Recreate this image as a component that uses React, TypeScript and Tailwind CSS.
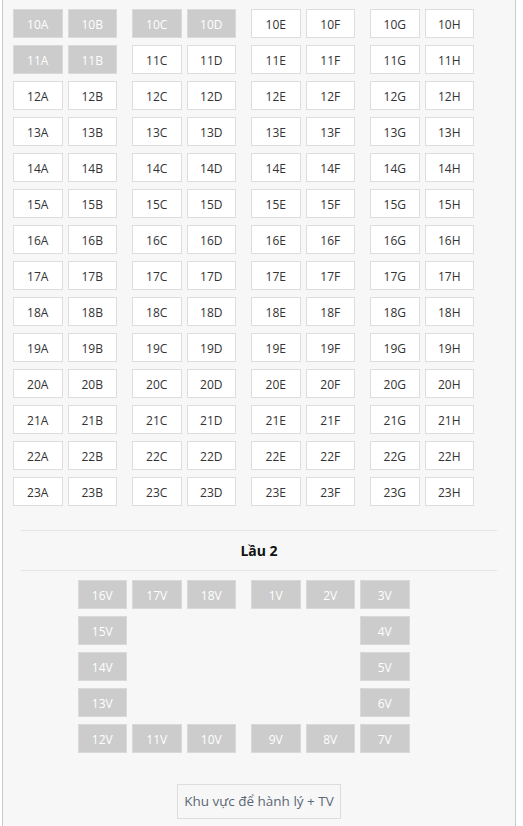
const font = { fontFamily: '"Open Sans", "Noto Sans", sans-serif' };

const upperRows = [10, 11, 12, 13, 14, 15, 16, 17, 18, 19, 20, 21, 22, 23];
const pairs = [
  ["A", "B"],
  ["C", "D"],
  ["E", "F"],
  ["G", "H"],
];
const booked = new Set(["10A", "10B", "10C", "10D", "11A", "11B"]);

function Seat({ label, taken }: { label: string; taken?: boolean }) {
  return (
    <div
      className={
        "flex h-[29px] w-[49.5px] items-center justify-center border pt-[2px] text-[12px] " +
        (taken ? "border-[#d9d9d9] bg-[#cccccc] text-white" : "border-[#dddddd] bg-white text-[#333]")
      }
    >
      {label}
    </div>
  );
}

function Gap() {
  return <div className="h-[29px] w-[49.5px]" />;
}

const floor2 = [
  [["16V", "17V", "18V"], ["1V", "2V", "3V"]],
  [["15V", "", ""], ["", "", "4V"]],
  [["14V", "", ""], ["", "", "5V"]],
  [["13V", "", ""], ["", "", "6V"]],
  [["12V", "11V", "10V"], ["9V", "8V", "7V"]],
];

export default function App() {
  return (
    <div className="min-h-[826px] bg-white" style={font}>
      <div className="ml-[2px] min-h-[826px] w-[514px] border-x border-[#cccccc] bg-[#f7f7f7] pt-[9px]">
        <div className="flex w-[461px] flex-col gap-[7px] pl-[10px] box-content">
          {upperRows.map((row) => (
            <div key={row} className="flex gap-[15px]">
              {pairs.map((pair) => (
                <div key={pair[0]} className="flex gap-[5px]">
                  {pair.map((col) => (
                    <Seat key={col} label={`${row}${col}`} taken={booked.has(`${row}${col}`)} />
                  ))}
                </div>
              ))}
            </div>
          ))}
        </div>

        <div className="mx-[18px] mt-[24px] border-t border-[#e5e5e5]" />
        <div className="flex h-[39px] items-center justify-center text-[14px] font-bold text-[#111]">Lầu 2</div>
        <div className="mx-[18px] border-t border-[#e5e5e5]" />

        <div className="mt-[9px] flex w-[461px] flex-col items-center gap-[7px] pl-[10px] box-content">
          {floor2.map((row, i) => (
            <div key={i} className="flex gap-[15px]">
              {row.map((group, j) => (
                <div key={j} className="flex gap-[5px]">
                  {group.map((s, k) => (s ? <Seat key={k} label={s} taken /> : <Gap key={k} />))}
                </div>
              ))}
            </div>
          ))}
        </div>

        <div className="mt-[31px] flex justify-center">
          <div className="flex h-[35px] items-center border border-[#dddddd] px-[6px] text-[13.5px] text-[#5b6776]">
            Khu vực để hành lý + TV
          </div>
        </div>
      </div>
    </div>
  );
}
